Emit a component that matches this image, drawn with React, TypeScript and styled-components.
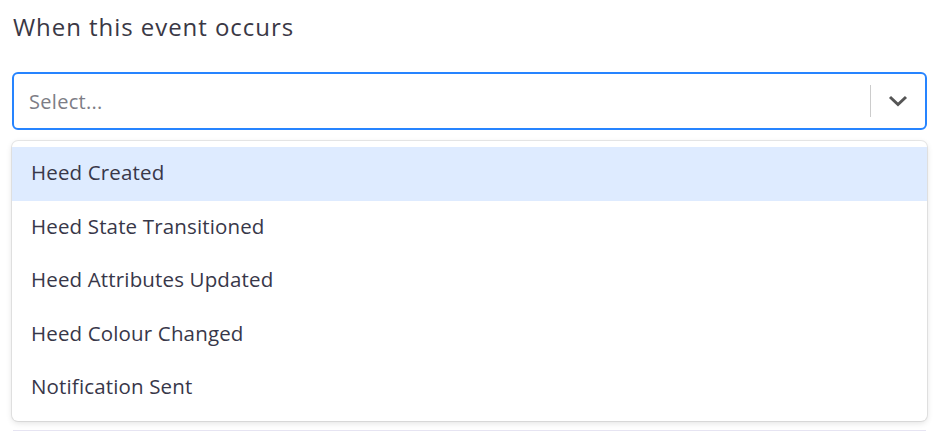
import styled, { createGlobalStyle } from 'styled-components';

const GlobalStyle = createGlobalStyle`
   html, body {
      margin: 0;
      padding: 0;
      background: #ffffff;
   }
   body {
      font-family: 'Open Sans', 'Noto Sans', sans-serif;
      color: #3b3a4a;
   }
`;

const Page = styled.div`
   padding: 12px 12px 0 12px;
   width: 915px;
`;

const Label = styled.div`
   font-size: 24px;
   line-height: 30px;
   padding-left: 1px;
   color: #3a3845;
   letter-spacing: 0.95px;
`;

const Control = styled.div`
   margin-top: 30px;
   height: 58px;
   box-sizing: border-box;
   border: 2px solid #2684ff;
   border-radius: 6px;
   display: flex;
   align-items: center;
`;

const Placeholder = styled.div`
   flex: 1;
   padding-left: 15px;
   font-size: 20px;
   letter-spacing: 0.3px;
   color: #7d7d86;
`;

const Separator = styled.span`
   width: 1px;
   height: 32px;
   background: #cccccc;
`;

const Indicator = styled.div`
   width: 54px;
   display: flex;
   justify-content: center;
   align-items: center;
`;

const Menu = styled.div`
   margin-top: 11px;
   border-radius: 6px;
   box-shadow: 0 0 0 1px rgba(0, 0, 0, 0.08), 0 2px 6px rgba(0, 0, 0, 0.12);
   padding: 6px 0;
   background: #ffffff;
`;

const Option = styled.div<{ $focused?: boolean }>`
   height: 53.5px;
   box-sizing: border-box;
   padding: 0 0 3px 19px;
   display: flex;
   align-items: center;
   font-size: 20.5px;
   letter-spacing: 0.15px;
   color: #383749;
   background: ${props => (props.$focused ? '#deebff' : 'transparent')};
`;

const Rule = styled.div`
   margin: 9px 1px 0 1px;
   height: 1px;
   background: #e6e4f2;
`;

const options = [
   'Heed Created',
   'Heed State Transitioned',
   'Heed Attributes Updated',
   'Heed Colour Changed',
   'Notification Sent',
];

const App = () => (
   <>
      <GlobalStyle />
      <Page>
         <Label>When this event occurs</Label>
         <Control>
            <Placeholder>Select...</Placeholder>
            <Separator />
            <Indicator>
               <svg width="20" height="20" viewBox="0 0 20 20">
                  <path d="M2 6 L10 13.5 L18 6" fill="none" stroke="#555555" strokeWidth="3" />
               </svg>
            </Indicator>
         </Control>
         <Menu>
            {options.map((o, i) => (
               <Option key={o} $focused={i === 0}>
                  {o}
               </Option>
            ))}
         </Menu>
         <Rule />
      </Page>
   </>
);

export default App;
